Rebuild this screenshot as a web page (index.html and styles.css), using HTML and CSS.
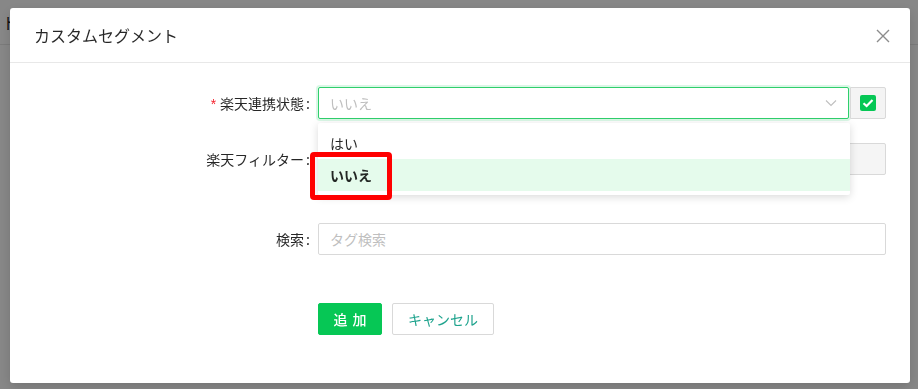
FILE: index.html
```html
<!DOCTYPE html>
<html lang="ja">
<head>
<meta charset="utf-8">
<link rel="stylesheet" href="styles.css">
</head>
<body>
<div class="page">
  <div class="page-header"><span class="page-title">ト</span></div>
</div>
<div class="overlay">
  <div class="modal">
    <div class="modal-header">
      <div class="modal-title">カスタムセグメント</div>
      <svg class="close" width="14" height="14" viewBox="0 0 14 14"><path d="M1 1L13 13M13 1L1 13" stroke="#8c8c8c" stroke-width="1.4" fill="none"/></svg>
    </div>
    <div class="modal-body">
      <div class="row">
        <label class="label required">楽天連携状態</label>
        <div class="control select-wrap">
          <div class="select">
            <span class="placeholder">いいえ</span>
            <svg class="arrow" width="12" height="8" viewBox="0 0 12 8"><path d="M1 1.5L6 6.5L11 1.5" stroke="#bfbfbf" stroke-width="1.1" fill="none"/></svg>
          </div>
          <div class="check-btn">
            <span class="checkbox"><svg width="12" height="10" viewBox="0 0 12 10"><path d="M1.5 5.2L4.6 8L10.5 2" stroke="#fff" stroke-width="2.2" fill="none"/></svg></span>
          </div>
          <div class="dropdown">
            <div class="option">はい</div>
            <div class="option selected">いいえ<span class="mark"></span></div>
          </div>
        </div>
      </div>
      <div class="row">
        <label class="label">楽天フィルター</label>
        <div class="control"><div class="input disabled"></div></div>
      </div>
      <div class="row row-gap">
        <label class="label">検索</label>
        <div class="control"><div class="input"><span class="placeholder">タグ検索</span></div></div>
      </div>
      <div class="actions">
        <button class="btn primary">追 加</button>
        <button class="btn">キャンセル</button>
      </div>
    </div>
  </div>
</div>
</body>
</html>
```
FILE: styles.css
```css
* { box-sizing: border-box; }
html, body { margin: 0; padding: 0; }
body {
  width: 918px;
  height: 389px;
  overflow: hidden;
  background: #fff;
  font-family: "Noto Sans CJK JP", "Noto Sans", sans-serif;
  font-size: 14px;
  color: rgba(0,0,0,0.85);
}
.page-header {
  height: 45px;
  border-bottom: 1px solid #e8e8e8;
  display: flex;
  align-items: center;
  padding-left: 2px;
}
.page-title { font-size: 16px; color: #222; }
.overlay {
  position: fixed;
  inset: 0;
  background: rgba(0,0,0,0.47);
}
.modal {
  position: absolute;
  left: 10px;
  top: 8px;
  width: 900px;
  height: 375px;
  background: #fff;
  border-radius: 3px;
  box-shadow: 0 4px 12px rgba(0,0,0,0.15);
}
.modal-header {
  height: 55px;
  border-bottom: 1px solid #e8e8e8;
  display: flex;
  align-items: center;
  justify-content: space-between;
  padding: 0 20px 0 24px;
}
.modal-title {
  font-size: 16px;
  color: rgba(0,0,0,0.85);
  font-weight: 400;
}
.close { display: block; margin-top: 1px; }
.modal-body {
  padding: 24px 24px 0 0;
}
.row {
  display: flex;
  align-items: center;
  height: 32px;
  margin-bottom: 24px;
}
.row.row-gap { margin-top: 48px; margin-bottom: 48px; }
.label {
  width: 308px;
  flex: none;
  text-align: right;
  color: rgba(0,0,0,0.85);
  white-space: nowrap;
}
.label::after {
  content: ":";
  margin: 0 8px 0 2px;
}
.label.required::before {
  content: "*";
  color: #f5222d;
  margin-right: 4px;
  font-family: SimSun, "Liberation Sans", sans-serif;
}
.control {
  flex: 1;
  height: 32px;
  display: flex;
  position: relative;
}
.select {
  flex: 1;
  height: 32px;
  border: 1px solid #2fcf6c;
  border-radius: 2px;
  box-shadow: 0 0 0 2px rgba(6,199,85,0.15);
  display: flex;
  align-items: center;
  justify-content: space-between;
  padding: 0 11px;
  background: #fff;
}
.placeholder { color: #bfbfbf; }
.arrow { display: block; }
.check-btn {
  width: 36px;
  height: 32px;
  flex: none;
  background: #f4f4f4;
  border: 1px solid #d9d9d9;
  border-radius: 0 2px 2px 0;
  display: flex;
  align-items: center;
  justify-content: center;
  margin-left: 1px;
}
.checkbox {
  width: 16px;
  height: 16px;
  border-radius: 2px;
  background: #06c755;
  display: flex;
  align-items: center;
  justify-content: center;
}
.checkbox svg { display: block; }
.input {
  flex: 1;
  height: 32px;
  border: 1px solid #d9d9d9;
  border-radius: 2px;
  display: flex;
  align-items: center;
  padding: 0 11px;
  background: #fff;
}
.input.disabled { background: #f5f5f5; }
.dropdown {
  position: absolute;
  left: 0;
  top: 36px;
  width: 532px;
  padding: 4px 0;
  background: #fff;
  border-radius: 2px;
  box-shadow: 0 2px 8px rgba(0,0,0,0.15);
  z-index: 5;
}
.option {
  height: 32px;
  line-height: 32px;
  padding: 0 12px;
  position: relative;
  color: rgba(0,0,0,0.85);
}
.option.selected {
  background: #e5fbec;
  font-weight: 700;
}
.mark {
  position: absolute;
  left: -8px;
  top: -7px;
  width: 82px;
  height: 48px;
  border: 5px solid #ff0000;
  border-radius: 4px;
}
.actions {
  display: flex;
  gap: 10px;
  padding-left: 308px;
}
.btn {
  height: 32px;
  padding: 0 15px;
  border: 1px solid #d9d9d9;
  border-radius: 2px;
  background: #fff;
  color: #1ea38d;
  font-family: "Noto Sans CJK JP", "Noto Sans", sans-serif;
  font-size: 14px;
}
.btn.primary {
  background: #06c755;
  border-color: #06c755;
  color: #fff;
  width: 64px;
  padding: 0;
  word-spacing: 2px;
  font-weight: 500;
}
```
